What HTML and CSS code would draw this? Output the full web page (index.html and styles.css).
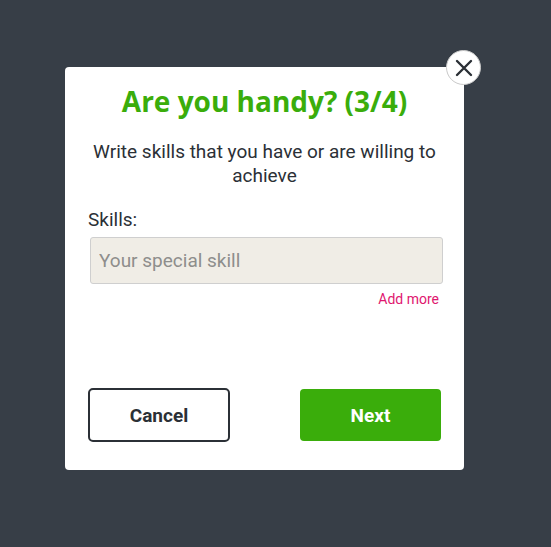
FILE: index.html
```html
<!DOCTYPE html>
<html>
<head>
<meta charset="utf-8">
<link rel="stylesheet" href="styles.css">
</head>
<body>
<div class="modal">
  <button class="close" aria-label="Close">
    <svg width="18" height="18" viewBox="0 0 18 18"><path d="M2 2 L16 16 M16 2 L2 16" stroke="#2b3036" stroke-width="2.4" stroke-linecap="round" fill="none"/></svg>
  </button>
  <h1 class="title">Are you handy? (3/4)</h1>
  <p class="desc">Write skills that you have or are willing to achieve</p>
  <label class="label">Skills:</label>
  <input class="field" type="text" placeholder="Your special skill">
  <div class="add-row"><a class="add">Add more</a></div>
  <div class="actions">
    <button class="btn cancel">Cancel</button>
    <button class="btn next">Next</button>
  </div>
</div>
</body>
</html>
```
FILE: styles.css
```css
html, body {
  margin: 0;
  padding: 0;
  background: #373e47;
  height: 100%;
}
body {
  font-family: Roboto, "Liberation Sans", sans-serif;
  color: #2b3036;
  padding: 67px 0 0 65px;
  box-sizing: border-box;
}
.modal {
  position: relative;
  width: 399px;
  height: 403px;
  box-sizing: border-box;
  background: #fff;
  border-radius: 4px;
  padding: 17px 23px 28px;
  display: flex;
  flex-direction: column;
}
.close {
  position: absolute;
  top: -17px;
  right: -17px;
  width: 35px;
  height: 35px;
  border-radius: 50%;
  background: #fff;
  border: 1px solid #c9c9c9;
  display: flex;
  align-items: center;
  justify-content: center;
  padding: 0;
}
.title {
  margin: 0;
  font-family: "Open Sans", "Noto Sans", sans-serif;
  font-weight: 700;
  font-size: 28px;
  line-height: 34px;
  color: #3aad0b;
  text-align: center;
}
.desc {
  margin: 22px 0 0;
  font-size: 19px;
  line-height: 24px;
  text-align: center;
  padding: 0;
}
.label {
  margin-top: 20px;
  font-size: 19px;
  line-height: 24px;
  margin-left: 0;
}
.field {
  margin: 5px 0 0 2px;
  height: 47px;
  box-sizing: border-box;
  width: 353px;
  background: #f0ede6;
  border: 1px solid #cfcfcf;
  border-radius: 3px;
  padding: 0 8px;
  font-family: Roboto, "Liberation Sans", sans-serif;
  font-size: 19px;
  color: #2b3036;
}
.field::placeholder {
  color: #8e8e8c;
}
.add-row {
  display: flex;
  justify-content: flex-end;
  margin-top: 6px;
  padding-right: 2px;
}
.add {
  font-size: 14px;
  line-height: 18px;
  color: #e0176f;
}
.actions {
  margin-top: auto;
  display: flex;
  justify-content: space-between;
}
.btn {
  width: 142px;
  height: 54px;
  box-sizing: border-box;
  font-family: Roboto, "Liberation Sans", sans-serif;
  font-weight: 700;
  font-size: 19px;
  border-radius: 5px;
}
.cancel {
  background: #fff;
  border: 2px solid #2b3036;
  color: #2b3036;
}
.next {
  margin-top: 1px;
  height: 52px;
  width: 141px;
  background: #3aad0b;
  border: none;
  color: #fff;
  border-radius: 4px;
}
```
